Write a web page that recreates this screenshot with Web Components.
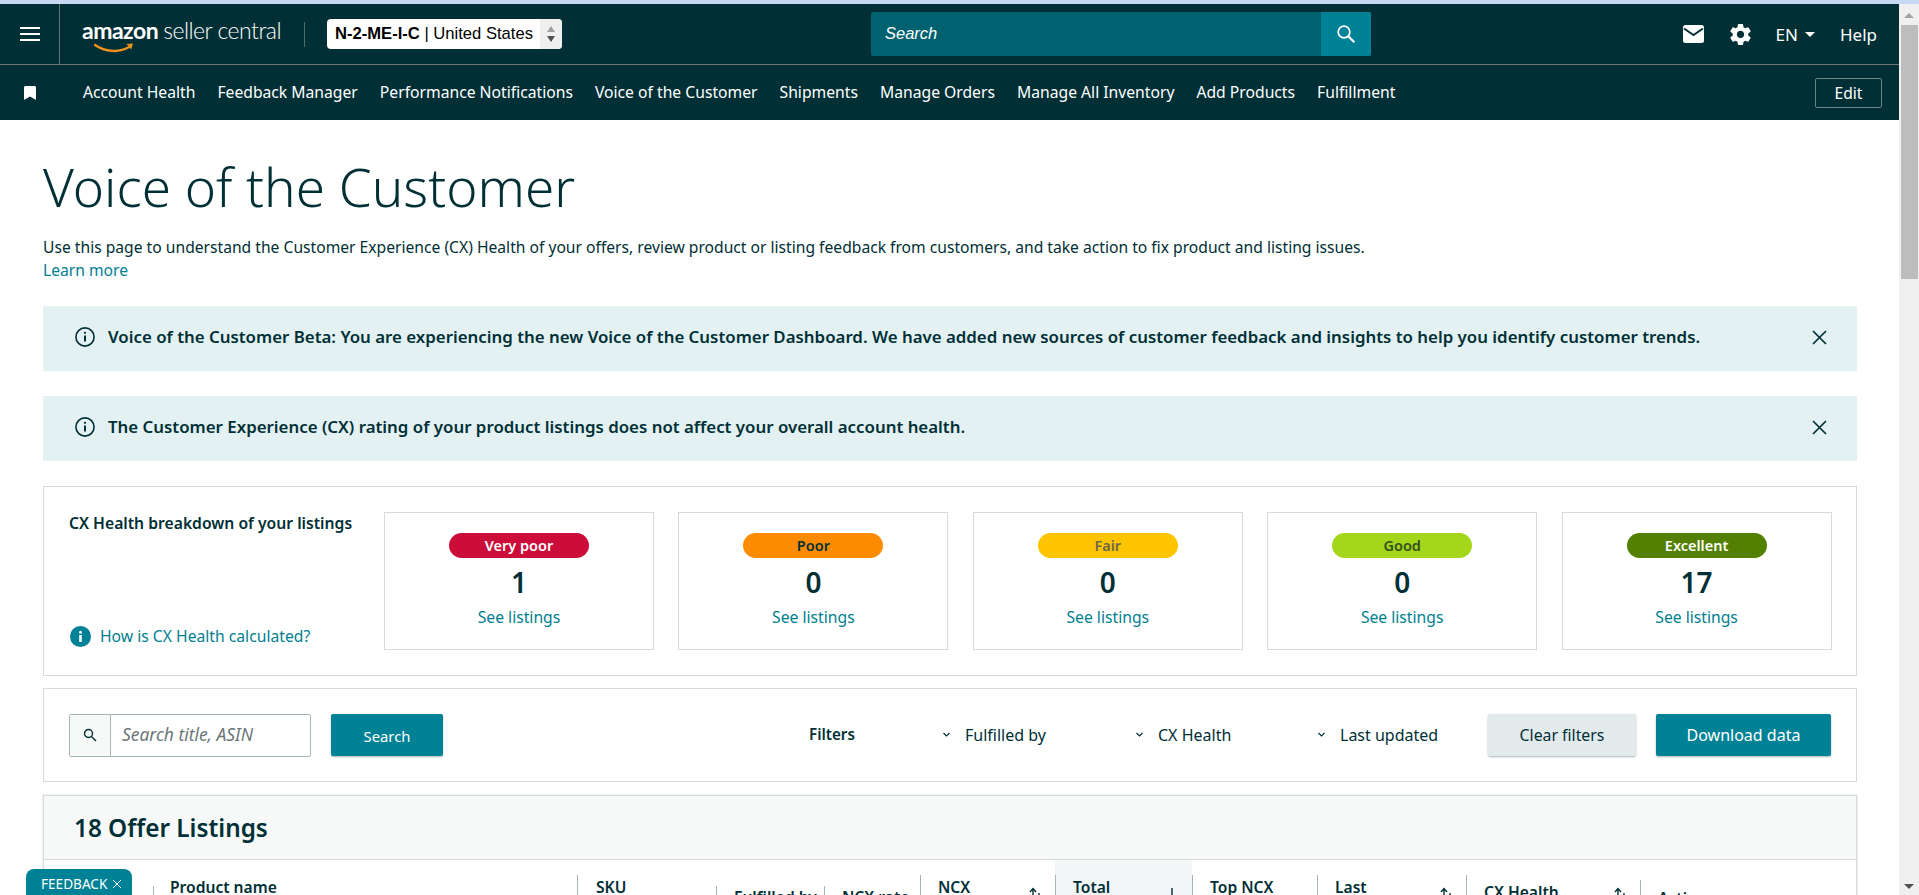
<!DOCTYPE html>
<html lang="en">
<head>
<meta charset="utf-8">
<title>Voice of the Customer</title>
<style>
  html, body { margin: 0; height: 100%; overflow: hidden; background: #fff; }
</style>
</head>
<body>
<sc-page>
  <sc-header></sc-header>
  <sc-nav>
    <sc-nav-link>Account Health</sc-nav-link>
    <sc-nav-link>Feedback Manager</sc-nav-link>
    <sc-nav-link>Performance Notifications</sc-nav-link>
    <sc-nav-link>Voice of the Customer</sc-nav-link>
    <sc-nav-link>Shipments</sc-nav-link>
    <sc-nav-link>Manage Orders</sc-nav-link>
    <sc-nav-link>Manage All Inventory</sc-nav-link>
    <sc-nav-link>Add Products</sc-nav-link>
    <sc-nav-link>Fulfillment</sc-nav-link>
  </sc-nav>
  <sc-intro></sc-intro>
  <sc-banner>Voice of the Customer Beta: You are experiencing the new Voice of the Customer Dashboard. We have added new sources of customer feedback and insights to help you identify customer trends.</sc-banner>
  <sc-banner>The Customer Experience (CX) rating of your product listings does not affect your overall account health.</sc-banner>
  <sc-health>
    <sc-health-card label="Very poor" count="1" bg="#cc0c39" fg="#ffffff"></sc-health-card>
    <sc-health-card label="Poor" count="0" bg="#ff8c00" fg="#002f36"></sc-health-card>
    <sc-health-card label="Fair" count="0" bg="#ffc400" fg="#6b6a4a"></sc-health-card>
    <sc-health-card label="Good" count="0" bg="#a4d71c" fg="#35501a"></sc-health-card>
    <sc-health-card label="Excellent" count="17" bg="#538000" fg="#ffffff"></sc-health-card>
  </sc-health>
  <sc-toolbar>
    <sc-filter slot="filters" style="width:193px">Fulfilled by</sc-filter>
    <sc-filter slot="filters" style="width:182px">CX Health</sc-filter>
    <sc-filter slot="filters" style="width:171px">Last updated</sc-filter>
  </sc-toolbar>
  <sc-listings>
    <sc-th style="grid-column:2;--pad:16px" bar="26" txt="16">Product name</sc-th>
    <sc-th style="--pad:18px" bar="15" txt="16">SKU</sc-th>
    <sc-th bar="26" txt="26">Fulfilled by</sc-th>
    <sc-th bar="26" txt="26">NCX rate</sc-th>
    <sc-th bar="15" txt="16" sort="both">NCX</sc-th>
    <sc-th bar="15" txt="16" sort="down" active>Total</sc-th>
    <sc-th bar="15" txt="16">Top NCX</sc-th>
    <sc-th bar="15" txt="16" sort="both">Last</sc-th>
    <sc-th bar="15" txt="21" sort="both">CX Health</sc-th>
    <sc-th bar="20" txt="27">Action</sc-th>
  </sc-listings>
  <sc-feedback></sc-feedback>
</sc-page>

<script>
const FONT = `"Noto Sans", Roboto, sans-serif`;

const pageTemplate = document.createElement("template");
pageTemplate.innerHTML = `
  <style>
    :host {
      display: flex;
      flex-direction: column;
      height: 100vh;
      font-family: ${FONT};
      color: #002f36;
    }
    .strip { height: 4px; background: #c6d8f2; flex: none; }
    .body { flex: 1; display: flex; min-height: 0; }
    main { flex: 1; min-width: 0; overflow: hidden; }
    .bar {
      width: 20px;
      background: #f0f0f0;
      flex: none;
      display: flex;
      flex-direction: column;
      align-items: center;
    }
    .up {
      margin-top: 9px;
      border: 5px solid transparent;
      border-top: 0;
      border-bottom: 5px solid #a3a3a3;
    }
    .thumb { width: 17px; height: 254px; margin: 7px 0 0 1px; background: #bdbdbd; }
    .down {
      margin-top: auto;
      margin-bottom: 6px;
      border: 5px solid transparent;
      border-bottom: 0;
      border-top: 5px solid #505050;
    }
  </style>
  <div class="strip"></div>
  <div class="body">
    <main><slot></slot></main>
    <div class="bar"><i class="up"></i><i class="thumb"></i><i class="down"></i></div>
  </div>
`;

class ScPage extends HTMLElement {
  constructor() {
    super();
    this.attachShadow({ mode: "open" }).appendChild(pageTemplate.content.cloneNode(true));
  }
}

const headerTemplate = document.createElement("template");
headerTemplate.innerHTML = `
  <style>
    :host {
      display: flex;
      align-items: center;
      height: 60px;
      background: #002f36;
      border-bottom: 1px solid #6c7778;
      color: #fff;
      font-family: ${FONT};
    }
    .menu {
      width: 60px;
      height: 60px;
      border-right: 1px solid #6c7778;
      box-sizing: border-box;
      display: flex;
      align-items: center;
      justify-content: center;
      flex: none;
    }
    .logo {
      position: relative;
      margin-left: 22px;
      width: 199px;
      height: 44px;
      flex: none;
      display: flex;
      align-items: center;
      white-space: nowrap;
      font-family: Lato, sans-serif;
      font-size: 23px;
      letter-spacing: -0.5px;
      line-height: 30px;
      padding-bottom: 8px;
      box-sizing: border-box;
    }
    .logo b { font-weight: 700; margin-right: 5px; }
    .logo span { font-weight: 300; }
    .logo svg { position: absolute; left: 12px; top: 31px; }
    .sep { width: 1px; height: 25px; background: #56686b; margin: 0 22px 0 23px; flex: none; }
    .select {
      width: 235px;
      height: 30px;
      background: #fff;
      border-radius: 4px;
      display: flex;
      align-items: center;
      color: #000;
      font: 16.6px/30px "Liberation Sans", Arial, sans-serif;
      overflow: hidden;
      flex: none;
      padding-left: 8px;
      box-sizing: border-box;
      white-space: nowrap;
    }
    .select .val { flex: 1; }
    .spin {
      width: 22px;
      height: 30px;
      background: #efefef;
      display: flex;
      flex-direction: column;
      align-items: center;
      justify-content: center;
      gap: 4px;
    }
    .spin i { border: 4.5px solid transparent; display: block; }
    .spin .u { border-top: 0; border-bottom: 6px solid #a0a0a0; }
    .spin .d { border-bottom: 0; border-top: 6px solid #505050; }
    .search {
      margin-left: 309px;
      width: 500px;
      height: 44px;
      display: flex;
      flex: none;
      background: #006270;
      border-radius: 2px;
      overflow: hidden;
    }
    .search .ph {
      flex: 1;
      padding-left: 14px;
      font: italic 16.5px/43px "Liberation Sans", Arial, sans-serif;
    }
    .search .go {
      width: 50px;
      background: #008296;
      display: flex;
      align-items: center;
      justify-content: center;
    }
    .right {
      margin-left: auto;
      display: flex;
      align-items: center;
      padding-right: 22px;
      font-size: 17px;
    }
    .caret { border: 5px solid transparent; border-bottom: 0; border-top: 5px solid #fff; margin-left: 7px; }
  </style>
  <div class="menu">
    <svg width="20" height="14" viewBox="0 0 20 14" fill="#fff"><rect width="20" height="2"/><rect y="6" width="20" height="2"/><rect y="12" width="20" height="2"/></svg>
  </div>
  <div class="logo">
    <b>amazon</b><span>seller central</span>
    <svg width="42" height="12" viewBox="0 0 42 12" fill="none">
      <path d="M1 2c10 7 24 8 34 2" stroke="#f0931e" stroke-width="2.4" stroke-linecap="round"/>
      <path d="M32 1l7-.6-2 6.6c-.5-2.5-2-4.5-5-6z" fill="#f0931e"/>
    </svg>
  </div>
  <div class="sep"></div>
  <div class="select">
    <div class="val"><b>N-2-ME-I-C</b> | United States</div>
    <div class="spin"><i class="u"></i><i class="d"></i></div>
  </div>
  <div class="search">
    <div class="ph">Search</div>
    <div class="go">
      <svg width="20" height="20" viewBox="0 0 20 20" fill="none" stroke="#fff" stroke-width="1.8"><circle cx="8" cy="8" r="5.8"/><path d="M12.3 12.3l6 6" stroke-width="2.2"/></svg>
    </div>
  </div>
  <div class="right">
    <svg width="21" height="18" viewBox="0 0 21 18" style="margin-right:24px"><rect width="21" height="18" rx="2.5" fill="#fff"/><path d="M1 3.5l9.5 6.5 9.5-6.5" fill="none" stroke="#002f36" stroke-width="2"/></svg>
    <svg width="25" height="25" viewBox="0 0 24 24" fill="#fff" style="margin-right:23px"><path d="M19.43 12.98c.04-.32.07-.64.07-.98s-.03-.66-.07-.98l2.11-1.65c.19-.15.24-.42.12-.64l-2-3.46c-.12-.22-.39-.3-.61-.22l-2.49 1c-.52-.4-1.08-.73-1.69-.98l-.38-2.65C14.46 2.18 14.25 2 14 2h-4c-.25 0-.46.18-.49.42l-.38 2.65c-.61.25-1.17.59-1.69.98l-2.49-1c-.23-.09-.49 0-.61.22l-2 3.46c-.13.22-.07.49.12.64l2.11 1.65c-.04.32-.07.65-.07.98s.03.66.07.98l-2.11 1.65c-.19.15-.24.42-.12.64l2 3.46c.12.22.39.3.61.22l2.49-1c.52.4 1.08.73 1.69.98l.38 2.65c.03.24.24.42.49.42h4c.25 0 .46-.18.49-.42l.38-2.65c.61-.25 1.17-.59 1.69-.98l2.49 1c.23.09.49 0 .61-.22l2-3.46c.12-.22.07-.49-.12-.64l-2.11-1.65zM12 15.5c-1.93 0-3.5-1.57-3.5-3.5s1.57-3.5 3.5-3.5 3.5 1.57 3.5 3.5-1.57 3.5-3.5 3.5z"/></svg>
    <span>EN</span><i class="caret"></i>
    <span style="margin-left:25px">Help</span>
  </div>
`;

class ScHeader extends HTMLElement {
  constructor() {
    super();
    this.attachShadow({ mode: "open" }).appendChild(headerTemplate.content.cloneNode(true));
  }
}

const navTemplate = document.createElement("template");
navTemplate.innerHTML = `
  <style>
    :host {
      display: flex;
      align-items: center;
      height: 55px;
      background: #002f36;
      color: #fff;
      font-family: ${FONT};
    }
    svg { margin-left: 24px; flex: none; }
    .links { display: flex; gap: 22px; margin-left: 47px; }
    button {
      all: unset;
      margin-left: auto;
      margin-right: 17px;
      box-sizing: border-box;
      width: 67px;
      height: 30px;
      border: 1px solid #6f8487;
      border-radius: 2px;
      text-align: center;
      font-size: 15.6px;
      line-height: 28px;
    }
  </style>
  <svg width="12" height="14" viewBox="0 0 12 14" fill="#fff"><path d="M0 1.5C0 .7.7 0 1.5 0h9c.8 0 1.5.7 1.5 1.5V14L6 10.6 0 14z"/></svg>
  <div class="links"><slot></slot></div>
  <button>Edit</button>
`;

class ScNav extends HTMLElement {
  constructor() {
    super();
    this.attachShadow({ mode: "open" }).appendChild(navTemplate.content.cloneNode(true));
  }
}

class ScNavLink extends HTMLElement {
  constructor() {
    super();
    this.attachShadow({ mode: "open" }).innerHTML = `
      <style>:host { display: block; font-size: 15.7px; line-height: 22px; white-space: nowrap; margin-top: -1px; }</style>
      <slot></slot>
    `;
  }
}

class ScIntro extends HTMLElement {
  constructor() {
    super();
    this.attachShadow({ mode: "open" }).innerHTML = `
      <style>
        :host { display: block; margin: 0 42px 24px 43px; padding-top: 26px; }
        h1 { margin: 0; font: 300 53px/82px ${FONT}; color: #002f36; }
        p { margin: 8px 0 0; font-size: 15.65px; line-height: 23px; white-space: nowrap; }
        a { color: #007f92; display: block; }
      </style>
      <h1>Voice of the Customer</h1>
      <p>Use this page to understand the Customer Experience (CX) Health of your offers, review product or listing feedback from customers, and take action to fix product and listing issues.<a>Learn more</a></p>
    `;
  }
}

class ScBanner extends HTMLElement {
  constructor() {
    super();
    this.attachShadow({ mode: "open" }).innerHTML = `
      <style>
        :host {
          display: flex;
          align-items: center;
          box-sizing: border-box;
          height: 65px;
          margin: 0 42px 25px 43px;
          padding: 0 30px 3px 32px;
          background: #e3f1f3;
          font-size: 16.85px;
          font-weight: 600;
          line-height: 22px;
        }
        .text { flex: 1; margin-left: 13px; white-space: nowrap; }
      </style>
      <svg width="20" height="20" viewBox="0 0 20 20" fill="none" stroke="#002f36" stroke-width="1.6">
        <circle cx="10" cy="10" r="9.1"/><path d="M10 8.6v6" stroke-width="2"/><circle cx="10" cy="5.8" r="1.1" fill="#002f36" stroke="none"/>
      </svg>
      <div class="text"><slot></slot></div>
      <svg width="15" height="15" viewBox="0 0 15 15" stroke="#002f36" stroke-width="1.7"><path d="M1 1l13 13M14 1L1 14"/></svg>
    `;
  }
}

const healthTemplate = document.createElement("template");
healthTemplate.innerHTML = `
  <style>
    :host {
      display: flex;
      gap: 25px;
      margin: 0 42px 12px 43px;
      padding: 25px;
      border: 1px solid #d5dbdb;
      height: 138px;
    }
    .side {
      width: 290px;
      flex: none;
      display: flex;
      flex-direction: column;
      justify-content: space-between;
      font-size: 15.7px;
      line-height: 24px;
    }
    .side h3 { margin: -1px 0 0; font-size: 15.7px; font-weight: 600; white-space: nowrap; }
    .how { display: flex; align-items: center; gap: 9px; color: #007f92; padding-bottom: 2px; }
    .how svg { margin-left: 1px; }
    .cards { display: flex; gap: 24.4px; }
  </style>
  <div class="side">
    <h3>CX Health breakdown of your listings</h3>
    <div class="how">
      <svg width="21" height="21" viewBox="0 0 21 21"><circle cx="10.5" cy="10.5" r="10.5" fill="#008296"/><circle cx="10.5" cy="6.3" r="1.5" fill="#fff"/><rect x="9.2" y="9" width="2.6" height="7" fill="#fff"/></svg>
      <span>How is CX Health calculated?</span>
    </div>
  </div>
  <div class="cards"><slot></slot></div>
`;

class ScHealth extends HTMLElement {
  constructor() {
    super();
    this.attachShadow({ mode: "open" }).appendChild(healthTemplate.content.cloneNode(true));
  }
}

const cardTemplate = document.createElement("template");
cardTemplate.innerHTML = `
  <style>
    :host {
      display: flex;
      flex-direction: column;
      align-items: center;
      box-sizing: border-box;
      width: 270px;
      height: 138px;
      padding-top: 20px;
      border: 1px solid #d5dbdb;
    }
    .pill {
      width: 140px;
      height: 25px;
      border-radius: 13px;
      text-align: center;
      font-size: 14.5px;
      font-weight: 600;
      line-height: 25px;
    }
    .count { margin-top: 7px; font-size: 28px; font-weight: 600; line-height: 34px; }
    a { margin-top: 7px; color: #007f92; font-size: 15.7px; line-height: 22px; }
  </style>
  <div class="pill"></div>
  <div class="count"></div>
  <a>See listings</a>
`;

class ScHealthCard extends HTMLElement {
  constructor() {
    super();
    this.attachShadow({ mode: "open" }).appendChild(cardTemplate.content.cloneNode(true));
  }

  connectedCallback() {
    const pill = this.shadowRoot.querySelector(".pill");
    pill.textContent = this.getAttribute("label");
    pill.style.background = this.getAttribute("bg");
    pill.style.color = this.getAttribute("fg");
    this.shadowRoot.querySelector(".count").textContent = this.getAttribute("count");
  }
}

const toolbarTemplate = document.createElement("template");
toolbarTemplate.innerHTML = `
  <style>
    :host {
      display: flex;
      align-items: center;
      height: 92px;
      margin: 0 42px 13px 43px;
      padding: 0 25px;
      border: 1px solid #d5dbdb;
      font-size: 14px;
    }
    .input {
      display: flex;
      box-sizing: border-box;
      width: 242px;
      height: 43px;
      border: 1px solid #a6b5b7;
      border-radius: 2px;
    }
    .ic {
      width: 40px;
      background: #f7f8f8;
      border-right: 1px solid #a6b5b7;
      display: flex;
      align-items: center;
      justify-content: center;
    }
    .ph { padding-left: 11px; color: #6c7778; font-style: italic; font-size: 17.4px; line-height: 39px; white-space: nowrap; }
    button {
      all: unset;
      box-sizing: border-box;
      height: 42px;
      border-radius: 2px;
      text-align: center;
      font-size: 15.8px;
      line-height: 42px;
      background: #008296;
      color: #fff;
      box-shadow: 0 1px 2px rgba(0, 47, 54, .35);
    }
    .search { width: 112px; margin-left: 20px; font-size: 14.8px; line-height: 44px; }
    .label { margin-left: auto; width: 133px; font-size: 15.2px; font-weight: 600; margin-top: -3px; }
    .filters { display: flex; }
    .clear { width: 148px; background: #e3eaeb; color: #002f36; margin-right: 20px; }
    .dl { width: 175px; font-size: 16px; }
  </style>
  <div class="input">
    <div class="ic"><svg width="14" height="14" viewBox="0 0 14 14" fill="none" stroke="#002f36" stroke-width="1.4"><circle cx="5.5" cy="5.5" r="4"/><path d="M8.5 8.5l4.5 4.5"/></svg></div>
    <div class="ph">Search title, ASIN</div>
  </div>
  <button class="search">Search</button>
  <div class="label">Filters</div>
  <div class="filters"><slot name="filters"></slot></div>
  <button class="clear">Clear filters</button>
  <button class="dl">Download data</button>
`;

class ScToolbar extends HTMLElement {
  constructor() {
    super();
    this.attachShadow({ mode: "open" }).appendChild(toolbarTemplate.content.cloneNode(true));
  }
}

class ScFilter extends HTMLElement {
  constructor() {
    super();
    this.attachShadow({ mode: "open" }).innerHTML = `
      <style>
        :host { display: flex; align-items: center; gap: 14px; font-size: 16px; line-height: 22px; }
        svg { flex: none; }
      </style>
      <svg width="9" height="6" viewBox="0 0 9 6" fill="none" stroke="#002f36" stroke-width="1.2"><path d="M1.5 1l3 3 3-3"/></svg>
      <span><slot></slot></span>
    `;
  }
}

const listingsTemplate = document.createElement("template");
listingsTemplate.innerHTML = `
  <style>
    :host {
      display: block;
      margin: 0 42px 0 43px;
      border: 1px solid #d5dbdb;
      border-bottom: 0;
      box-shadow: 0 0 2px rgba(0, 47, 54, .2);
      height: 200px;
    }
    .head {
      box-sizing: border-box;
      height: 64px;
      padding-left: 30px;
      background: #f7f8f8;
      border-bottom: 1px solid #d5dbdb;
      font-size: 24.3px;
      font-weight: 600;
      line-height: 64px;
    }
    .cols {
      display: grid;
      grid-template-columns: 109px 424px 139px 108px 96px 135px 137px 125px 149px 174px 1fr;
      height: 130px;
    }
  </style>
  <div class="head">18 Offer Listings</div>
  <div class="cols"><slot></slot></div>
`;

class ScListings extends HTMLElement {
  constructor() {
    super();
    this.attachShadow({ mode: "open" }).appendChild(listingsTemplate.content.cloneNode(true));
  }
}

const thTemplate = document.createElement("template");
thTemplate.innerHTML = `
  <style>
    :host {
      display: block;
      font-size: 15.6px;
      font-weight: 600;
      line-height: 22px;
      white-space: nowrap;
    }
    :host([active]) { background: #f2f6f7; }
    .bar {
      margin-top: var(--bar);
      height: 60px;
      border-left: 1px solid #a6b5b7;
      display: flex;
      justify-content: space-between;
      padding: 0 14px 0 var(--pad, 17px);
    }
    .label { margin-top: calc(var(--txt) - var(--bar)); }
    svg { margin-top: 12px; flex: none; display: none; }
  </style>
  <div class="bar">
    <div class="label"><slot></slot></div>
    <svg class="both" width="12" height="16" viewBox="0 0 12 16" fill="none" stroke="#002f36" stroke-width="1.4">
      <path d="M4 15V2M1 5l3-3.5L7 5"/><path d="M10 6v9M8.2 12.5L10 15l1.8-2.5"/>
    </svg>
    <svg class="down" width="12" height="16" viewBox="0 0 12 16" fill="none" stroke="#002f36" stroke-width="1.4">
      <path d="M6 1v13M3 11l3 3.5 3-3.5"/>
    </svg>
  </div>
`;

class ScTh extends HTMLElement {
  constructor() {
    super();
    this.attachShadow({ mode: "open" }).appendChild(thTemplate.content.cloneNode(true));
  }

  get sort() {
    return this.getAttribute("sort");
  }

  connectedCallback() {
    this.style.setProperty("--bar", `${this.getAttribute("bar")}px`);
    this.style.setProperty("--txt", `${this.getAttribute("txt")}px`);
    if (this.sort) {
      this.shadowRoot.querySelector(`.${this.sort}`).style.display = "block";
    }
  }
}

class ScFeedback extends HTMLElement {
  constructor() {
    super();
    this.attachShadow({ mode: "open" }).innerHTML = `
      <style>
        :host {
          position: fixed;
          left: 26px;
          bottom: 0;
          box-sizing: border-box;
          width: 106px;
          height: 26px;
          padding: 3px 0 0 15px;
          display: flex;
          align-items: center;
          gap: 5px;
          background: #008296;
          border-radius: 8px 8px 0 0;
          color: #fff;
          font-size: 13.6px;
          line-height: 23px;
        }
      </style>
      <span>FEEDBACK</span>
      <svg width="10" height="10" viewBox="0 0 10 10" stroke="#fff" stroke-width="1"><path d="M1 1l8 8M9 1L1 9"/></svg>
    `;
  }
}

customElements.define("sc-page", ScPage);
customElements.define("sc-header", ScHeader);
customElements.define("sc-nav", ScNav);
customElements.define("sc-nav-link", ScNavLink);
customElements.define("sc-intro", ScIntro);
customElements.define("sc-banner", ScBanner);
customElements.define("sc-health", ScHealth);
customElements.define("sc-health-card", ScHealthCard);
customElements.define("sc-toolbar", ScToolbar);
customElements.define("sc-filter", ScFilter);
customElements.define("sc-listings", ScListings);
customElements.define("sc-th", ScTh);
customElements.define("sc-feedback", ScFeedback);
</script>
</body>
</html>
